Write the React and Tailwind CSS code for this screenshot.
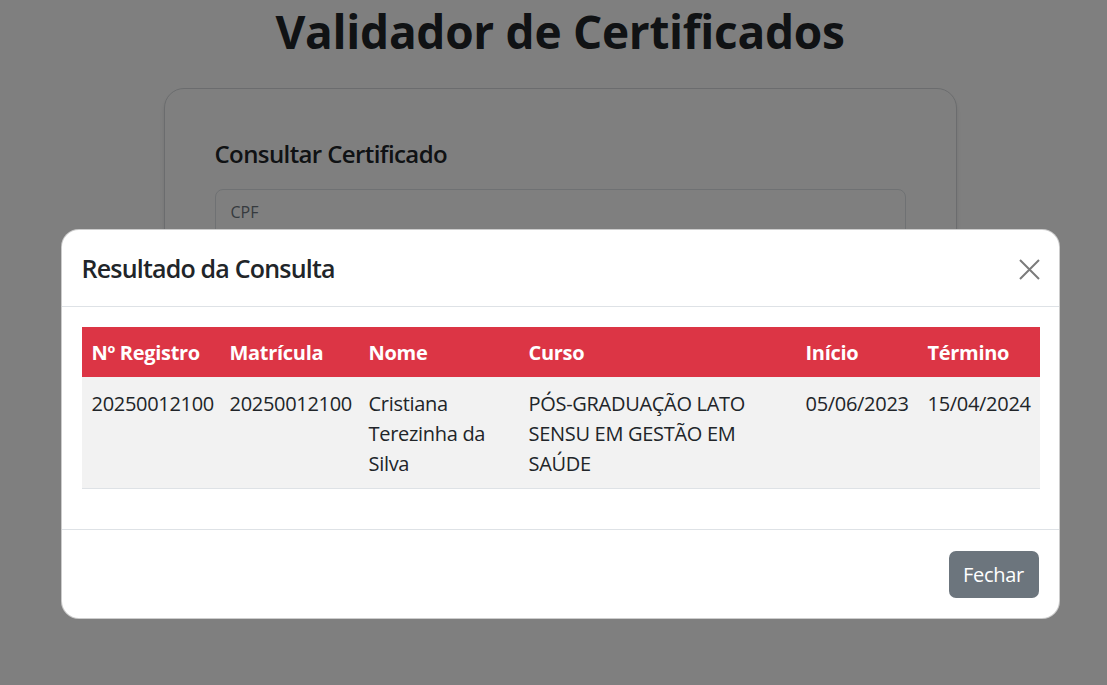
import React from 'react';

const columns = [
  { label: 'Nº Registro', width: 'w-[138px]' },
  { label: 'Matrícula', width: 'w-[139px]' },
  { label: 'Nome', width: 'w-[160px]' },
  { label: 'Curso', width: 'w-[277px]' },
  { label: 'Início', width: 'w-[122px]' },
  { label: 'Término', width: 'w-[122px]' },
];

const row = [
  '20250012100',
  '20250012100',
  'Cristiana Terezinha da Silva',
  'PÓS-GRADUAÇÃO LATO SENSU EM GESTÃO EM SAÚDE',
  '05/06/2023',
  '15/04/2024',
];

const App = () => {
  return (
    <div className="relative h-[685px] w-[1107px] overflow-hidden bg-white font-['Open_Sans',sans-serif] text-[#212529]">
      {/* Page behind the modal */}
      <div className="w-[1120px]">
        <h1 className="text-center text-[46px] font-bold leading-[63px] tracking-[-0.3px]">
          Validador de Certificados
        </h1>
        <div className="mx-auto mt-[25px] h-[470px] w-[793px] rounded-[20px] border border-[#d6d9dc] bg-white px-[50px] pt-[48px] shadow-md">
          <h4 className="text-[24px] font-semibold leading-[34px] tracking-[-0.6px]">Consultar Certificado</h4>
          <div className="mt-[18px] h-[60px] rounded-[8px] border border-[#dee2e6] px-[15px] pt-[10px] text-[16px] text-[#6c757d]">
            CPF
          </div>
        </div>
      </div>

      {/* Backdrop */}
      <div className="absolute inset-0 bg-black/50" />

      {/* Modal */}
      <div className="absolute left-0 top-[229px] flex w-[1120px] justify-center">
        <div className="w-[999px] overflow-hidden rounded-[18px] border border-black/20 bg-white">
          <div className="flex h-[77px] items-center justify-between border-b border-[#dee2e6] pl-[20px] pr-[19px]">
            <h5 className="text-[25px] font-semibold leading-[37px] tracking-[-0.8px]">Resultado da Consulta</h5>
            <svg width="21" height="21" viewBox="0 0 21 21" className="mt-[2px]">
              <path d="M1 1L20 20M20 1L1 20" stroke="#7b7b7b" strokeWidth="2" strokeLinecap="butt" />
            </svg>
          </div>

          <div className="px-[20px] pb-[40px] pt-[20px]">
            <table className="w-full table-fixed border-collapse text-[20px] leading-[30px] tracking-[-0.3px]">
              <thead>
                <tr className="bg-[#dc3545] text-white">
                  {columns.map((c) => (
                    <th key={c.label} className={`${c.width} px-[10px] pb-[9px] pt-[11px] text-left font-bold`}>
                      {c.label}
                    </th>
                  ))}
                </tr>
              </thead>
              <tbody>
                <tr className="border-b border-[#dee2e6] bg-[#f2f2f2]">
                  {row.map((v, i) => (
                    <td key={i} className="px-[10px] pb-[9px] pt-[12px] align-top">
                      {v}
                    </td>
                  ))}
                </tr>
              </tbody>
            </table>
          </div>

          <div className="flex justify-end border-t border-[#dee2e6] px-[20px] pb-[20px] pt-[21px]">
            <button className="h-[47px] w-[90px] rounded-[7px] bg-[#6c757d] text-[20px] tracking-[-0.3px] text-white">
              Fechar
            </button>
          </div>
        </div>
      </div>
    </div>
  );
};

export default App;
